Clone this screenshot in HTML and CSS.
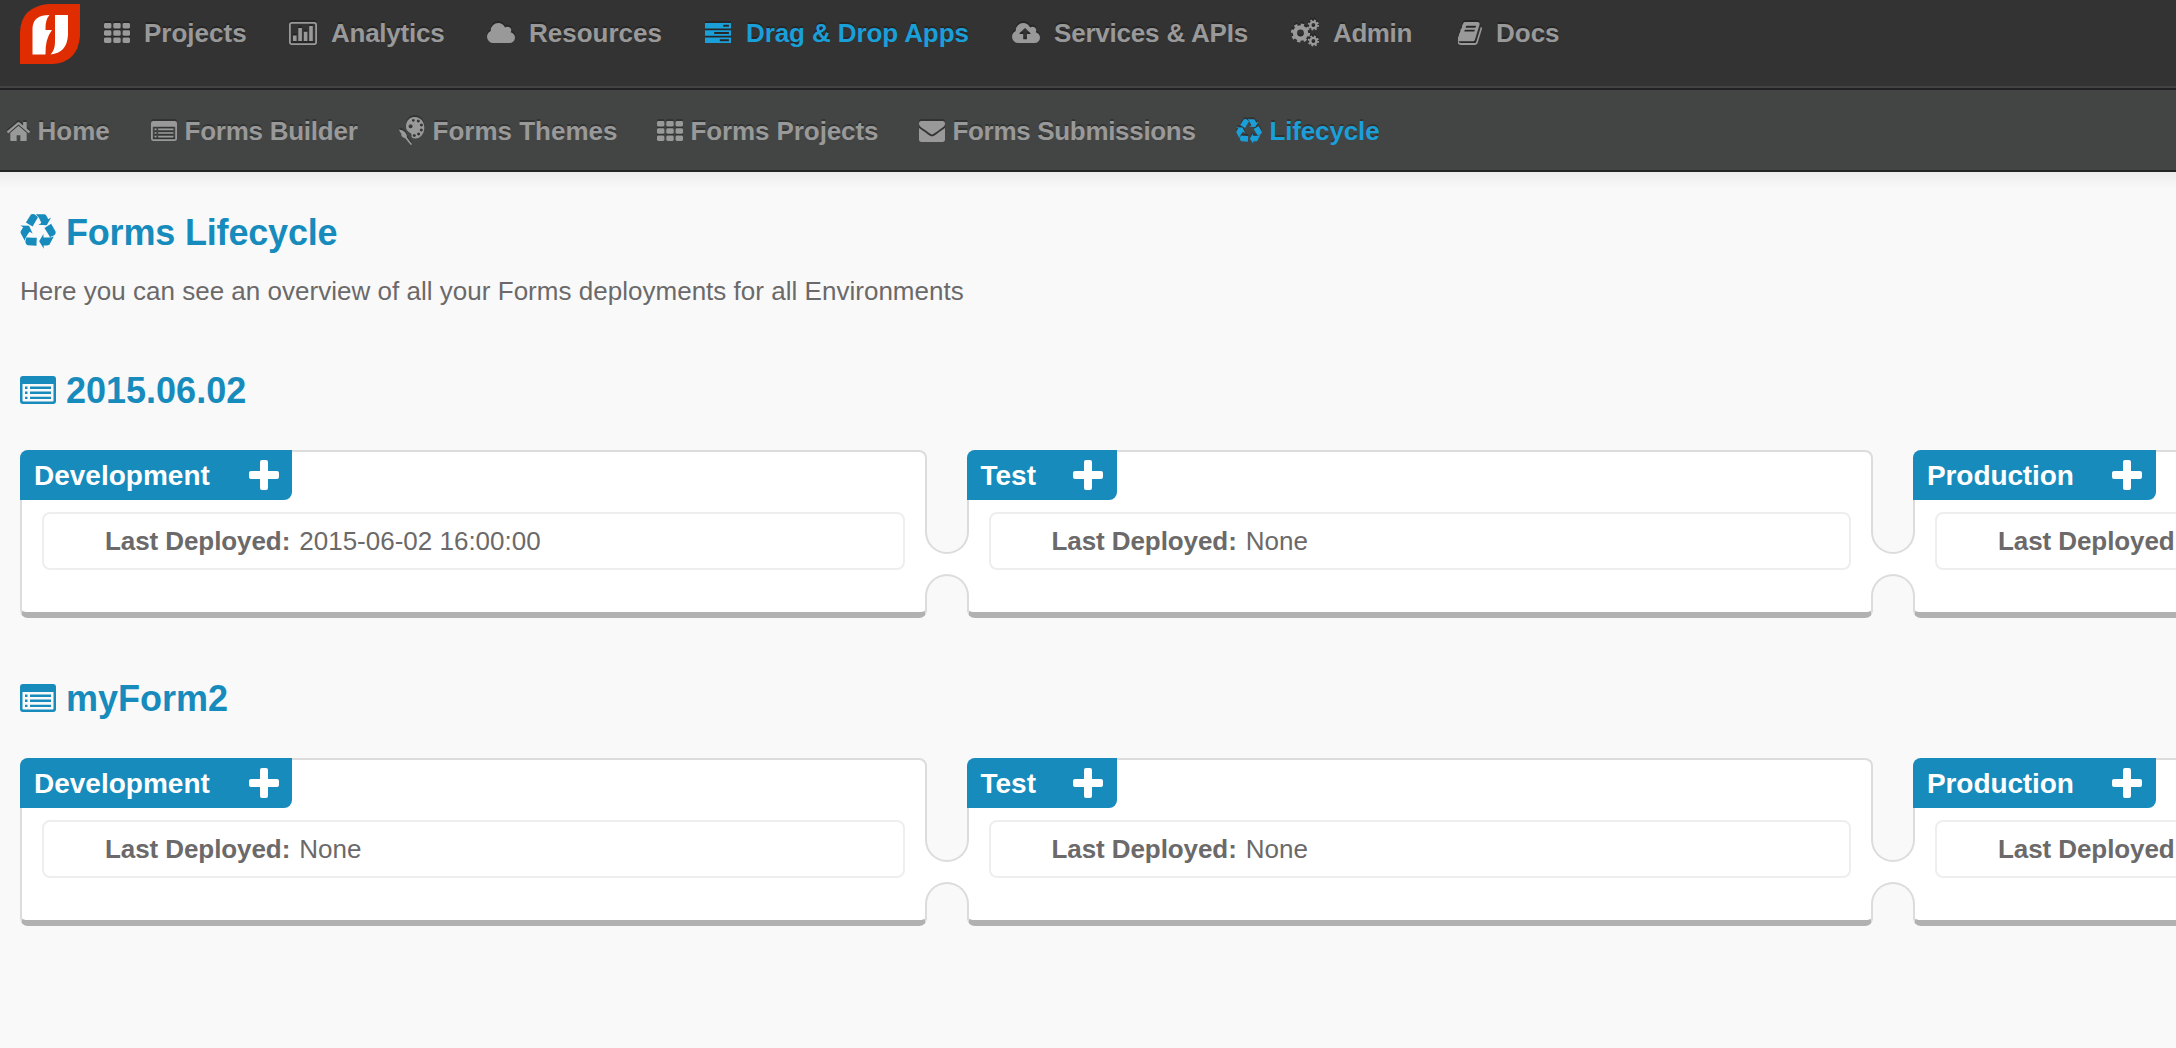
FILE: index.html
```html
<!DOCTYPE html>
<html lang="en">
<head>
<meta charset="utf-8">
<title>Forms Lifecycle</title>
<link rel="stylesheet" href="styles.css">
</head>
<body>
<svg class="sprite" aria-hidden="true">
  <symbol id="th" viewBox="0 0 26 20"><rect width="7.4" height="5.4" rx="1.4"/><rect x="9.3" width="7.4" height="5.4" rx="1.4"/><rect x="18.6" width="7.4" height="5.4" rx="1.4"/><rect y="7.3" width="7.4" height="5.4" rx="1.4"/><rect x="9.3" y="7.3" width="7.4" height="5.4" rx="1.4"/><rect x="18.6" y="7.3" width="7.4" height="5.4" rx="1.4"/><rect y="14.6" width="7.4" height="5.4" rx="1.4"/><rect x="9.3" y="14.6" width="7.4" height="5.4" rx="1.4"/><rect x="18.6" y="14.6" width="7.4" height="5.4" rx="1.4"/></symbol>
  <symbol id="chart" viewBox="0 0 28 23"><rect x=".9" y=".9" width="26.2" height="21.2" rx="1.8" fill="none" stroke="currentColor" stroke-width="1.8"/><path d="M4 13.5h3.6V19H4zM9.3 6h3.6v13H9.3zM14.8 9.7h3.6V19h-3.6zM20.2 4h3.6v15h-3.6z"/></symbol>
  <symbol id="cloud" viewBox="64 128 1920 1408" preserveAspectRatio="none"><path d="M1984 1152q0 159-112.5 271.5t-271.5 112.5h-1088q-185 0-316.5-131.5t-131.5-316.5q0-132 71-241.5t187-163.5q-2-28-2-43 0-212 150-362t362-150q158 0 286.5 88t187.5 230q70-62 166-62 106 0 181 75t75 181q0 75-41 138 129 30 213 134.5t84 239.5z"/></symbol>
  <symbol id="tasks" viewBox="0 0 26 20"><path fill-rule="evenodd" d="M0 0h26v5.4H0zM18.3 1.7v2h5.6v-2zM0 7.3h26v5.4H0zM9.2 9v2h14.7V9zM0 14.6h26V20H0zM14.8 16.3v2h9.1v-2z"/></symbol>
  <symbol id="upload" viewBox="0 192 1920 1408" preserveAspectRatio="none"><path d="M1280 928q0-14-9-23L919 553q-9-9-23-9t-23 9L522 904q-10 12-10 24 0 14 9 23t23 9h224v352q0 13 9.500 22.500t22.500 9.500h192q13 0 22.500-9.500t9.500-22.500V960h224q13 0 22.500-9.500T1280 928zm640 288q0 159-112.500 271.500T1536 1600H448q-185 0-316.500-131.500T0 1152q0-130 70-240t188-165q-2-30-2-43 0-212 150-362t362-150q156 0 285.500 87T1242 510q71-62 166-62 106 0 181 75t75 181q0 76-41 138 130 31 213.500 135.500T1920 1216z"/></symbol>
  <symbol id="cogs" viewBox="0 0 28 28"><g fill="none" stroke="currentColor"><circle cx="9.500" cy="14" r="5.600" stroke-width="4.400"/><circle cx="9.500" cy="14" r="8.300" stroke-width="2.600" stroke-dasharray="3.259"/><circle cx="22.400" cy="6" r="3.100" stroke-width="2.400"/><circle cx="22.400" cy="6" r="4.700" stroke-width="1.800" stroke-dasharray="1.846"/><circle cx="22.400" cy="22" r="3.100" stroke-width="2.400"/><circle cx="22.400" cy="22" r="4.700" stroke-width="1.800" stroke-dasharray="1.846"/></g></symbol>
  <symbol id="book" viewBox="64 128 1604 1536" preserveAspectRatio="none"><path d="M1639 478q40 57 18 129l-275 906q-19 64-76.500 107.500t-122.500 43.500h-923q-77 0-148.500-53.500t-99.500-131.500q-24-67-2-127 0-4 3-27t4-37q1-8-3-21.500t-3-19.500q2-11 8-21t16.500-23.500 16.500-23.500q23-38 45-91.500t30-91.500q3-10 .5-30t-.5-28q3-11 17-28t17-23q21-36 42-92t25-90q1-9-2.500-32t.5-28q4-13 22-30.500t22-22.500q19-26 42.500-84.500t27.500-96.500q1-8-3-25.500t-2-26.500q2-8 9-18t18-23 17-21q8-12 16.500-30.500t15-35 16-36 19.500-32 26.500-23.500 36-11.500 47.500 5.500l-1 3q38-9 51-9h761q74 0 114 56t18 130l-274 906q-36 119-71.500 153.500t-128.500 34.500h-869q-27 0-38 15-11 16-1 43 24 70 144 70h923q29 0 56-15.500t35-41.500l300-987q7-22 5-57 38 15 59 43zm-1064 2q-4 13 2 22.500t20 9.500h608q13 0 25.500-9.500t16.500-22.500l21-64q4-13-2-22.500t-20-9.500h-608q-13 0-25.500 9.500t-16.500 22.500zm-83 256q-4 13 2 22.500t20 9.500h608q13 0 25.500-9.500t16.500-22.500l21-64q4-13-2-22.500t-20-9.500h-608q-13 0-25.500 9.500t-16.500 22.500z"/></symbol>
  <symbol id="home" viewBox="90 253 1612 1283" preserveAspectRatio="none"><path d="M1472 992v480q0 26-19 45t-45 19h-384v-384h-256v384h-384q-26 0-45-19t-19-45v-480q0-1 .5-3t.5-3l575-474 575 474q1 2 1 6zm223-69l-62 74q-8 9-21 11h-3q-13 0-21-7l-692-577-692 577q-12 8-24 7-13-2-21-11l-62-74q-8-10-7-23.500t11-21.500l719-599q32-26 76-26t76 26l244 204v-195q0-14 9-23t23-9h192q14 0 23 9t9 23v408l219 182q10 8 11 21.500t-7 23.500z"/></symbol>
  <symbol id="form" viewBox="0 0 36 28" preserveAspectRatio="none"><path fill-rule="evenodd" d="M3 0h30a3 3 0 0 1 3 3v22a3 3 0 0 1-3 3H3a3 3 0 0 1-3-3V3a3 3 0 0 1 3-3zM2.500 8v16.700q0 .8.8.8h29.400q.8 0 .8-.8V8z"/><path d="M5 10.500h2.500v2.400H5zM10 10.500h21v2.400H10zM5 15.600h2.500V18H5zM10 15.600h21V18H10zM5 20.700h2.500v2.400H5zM10 20.700h21v2.400H10z"/></symbol>
  <symbol id="palette" viewBox="0 0 26 28"><path fill-rule="evenodd" d="M15.500 0C22 0 25.500 5 25.300 11c-.2 6-4 10.500-8.800 10.500-3 0-4.300-1.300-4-3 .3-2-.8-2.300-2.300-3.300C8 13.800 6.700 12 7 8.500 7.500 3.500 11 0 15.500 0zM11.600 7.200a2 2 0 1 0 .01 0zM14.300 1.900a1.400 1.400 0 1 0 .01 0zM19.300 2.500a1.500 1.500 0 1 0 .01 0zM22.400 6.500a1.500 1.500 0 1 0 .01 0zM22.300 11.500a1.500 1.500 0 1 0 .01 0zM19.600 15.400a1.500 1.500 0 1 0 .01 0zM15.300 17a1.500 1.500 0 1 0 .01 0z"/><path d="M0 12.500q4.500.5 6.500 3.200 1.700 2.500 1.500 4.800L13 27.300l-1.300.7-5.200-6.600Q1.500 20 2.300 16.500q-1.500-1-2.300-4z"/></symbol>
  <symbol id="mail" viewBox="0 256 1792 1408" preserveAspectRatio="none"><path d="M1792 710v794q0 66-47 113t-113 47h-1472q-66 0-113-47t-47-113v-794q44 49 101 87 362 246 497 345 57 42 92.500 65.500t94.500 48 110 24.500h2q51 0 110-24.500t94.500-48 92.500-65.500q170-123 498-345 57-39 100-87zm0-294q0 79-49 151t-122 123q-376 261-468 325-10 7-42.500 31t-54 38.500-52 32.500-57.500 27-50 9h-2q-23 0-50-9t-57.500-27-52-32.500-54-38.500-42.500-31q-91-64-262-182.500t-205-142.500q-62-42-117-115.500t-55-136.500q0-78 41.500-130t118.500-52h1472q65 0 112.500 47t47.500 113z"/></symbol>
  <symbol id="recycle" viewBox="0 0 1792 1720" preserveAspectRatio="none"><path d="M836 1169l-15 368-2 22-420-29q-36-3-67-31.500t-47-65.500q-11-27-14.500-55t4-65 12-55 21.500-64 19-53q78 12 509 28zm-387-586l180 379-147-92q-63 72-111.500 144.500t-72.500 125-39.500 94.500-18.500 63l-4 21-190-357q-17-26-18-56t6-47l8-18q35-63 114-188l-140-86zm1231 517l-188 359q-12 29-36.500 46.500t-43.500 20.500l-18 4q-71 7-219 12l8 164-230-367 211-362 7 173q170 16 283 5t170-33zm-785-924q-47 63-265 435l-317-187-19-12 225-356q20-31 60-45t80-10q24 2 48.500 12t42 21 41.500 33 36 34.500 36 39.500 32 35zm655 307l212 363q18 37 12.500 76t-27.500 74q-13 20-33 37t-38 28-48.500 22-47 16-51.500 14-46 12q-34-72-265-436l313-195zm-143-226l142-83-220 373-419-20 151-86q-34-89-75-166t-75.500-123.500-64.500-80-47-46.500l-17-13 405 1q31-3 58 10.500t39 28.500l11 15q39 61 112 190z"/></symbol>
  <symbol id="plus" viewBox="0 0 30 30"><path d="M13 0h4q2 0 2 2v9h9q2 0 2 2v4q0 2-2 2h-9v9q0 2-2 2h-4q-2 0-2-2v-9H2q-2 0-2-2v-4q0-2 2-2h9V2q0-2 2-2z"/></symbol>
</svg>

<header class="topbar">
  <svg class="logo" viewBox="0 0 60 60"><path fill="#df2c00" d="M0 60V28Q1 3 28 0h32v32q-2 26-27 28z"/><path fill="#fff" d="M12.500 50.500V24Q13 11 29.500 11q-4.500 5-4 15H32q-7 9-6.500 24.500zM35 11h13v20q-1 18-17.500 19.500Q35 46 35 38z"/></svg>
  <nav class="nav main">
    <a class="i1"><svg class="icon" style="width:26px;height:20px"><use href="#th"/></svg>Projects</a>
    <a class="i2"><svg class="icon" style="width:28px;height:23px"><use href="#chart"/></svg>Analytics</a>
    <a class="i3"><svg class="icon" style="width:28px;height:20px"><use href="#cloud"/></svg>Resources</a>
    <a class="i4 active"><svg class="icon" style="width:26px;height:20px"><use href="#tasks"/></svg>Drag &amp; Drop Apps</a>
    <a class="i5"><svg class="icon" style="width:28px;height:20px"><use href="#upload"/></svg>Services &amp; APIs</a>
    <a class="i6"><svg class="icon" style="width:28px;height:28px"><use href="#cogs"/></svg>Admin</a>
    <a class="i7"><svg class="icon" style="width:24px;height:23px"><use href="#book"/></svg>Docs</a>
  </nav>
</header>
<nav class="nav sub">
  <a class="s1"><svg class="icon" style="width:23px;height:19px"><use href="#home"/></svg>Home</a>
  <a class="s2"><svg class="icon" style="width:26px;height:20px"><use href="#form"/></svg>Forms Builder</a>
  <a class="s3"><svg class="icon" style="width:26px;height:28px"><use href="#palette"/></svg>Forms Themes</a>
  <a class="s4"><svg class="icon" style="width:26px;height:20px"><use href="#th"/></svg>Forms Projects</a>
  <a class="s5"><svg class="icon" style="width:26px;height:21px"><use href="#mail"/></svg>Forms Submissions</a>
  <a class="s6 active"><svg class="icon" style="width:26px;height:25px"><use href="#recycle"/></svg>Lifecycle</a>
</nav>

<main class="page">
  <h1 class="title"><svg class="recycle"><use href="#recycle"/></svg>Forms Lifecycle</h1>
  <p class="intro">Here you can see an overview of all your Forms deployments for all Environments</p>

  <section class="form">
    <h2 class="title"><svg class="list"><use href="#form"/></svg>2015.06.02</h2>
    <div class="stages">
      <article class="card"><div class="tab dev">Development<svg class="plus"><use href="#plus"/></svg></div><div class="info"><b>Last Deployed:</b>2015-06-02 16:00:00</div></article>
      <div class="link"><i class="lobe"></i><i class="arch"></i></div>
      <article class="card"><div class="tab test">Test<svg class="plus"><use href="#plus"/></svg></div><div class="info"><b>Last Deployed:</b>None</div></article>
      <div class="link"><i class="lobe"></i><i class="arch"></i></div>
      <article class="card"><div class="tab prod">Production<svg class="plus"><use href="#plus"/></svg></div><div class="info"><b>Last Deployed:</b>None</div></article>
    </div>
  </section>

  <section class="form">
    <h2 class="title"><svg class="list"><use href="#form"/></svg>myForm2</h2>
    <div class="stages">
      <article class="card"><div class="tab dev">Development<svg class="plus"><use href="#plus"/></svg></div><div class="info"><b>Last Deployed:</b>None</div></article>
      <div class="link"><i class="lobe"></i><i class="arch"></i></div>
      <article class="card"><div class="tab test">Test<svg class="plus"><use href="#plus"/></svg></div><div class="info"><b>Last Deployed:</b>None</div></article>
      <div class="link"><i class="lobe"></i><i class="arch"></i></div>
      <article class="card"><div class="tab prod">Production<svg class="plus"><use href="#plus"/></svg></div><div class="info"><b>Last Deployed:</b>None</div></article>
    </div>
  </section>
</main>
</body>
</html>
```
FILE: styles.css
```css
* { box-sizing: border-box; }
body {
  margin: 0;
  height: 1048px;
  overflow: hidden;
  background: #f9f9f9;
  color: #6b6969;
  font: 26px/30px "Liberation Sans", Arial, sans-serif;
}
svg { fill: currentColor; display: block; flex: none; }
.sprite { display: none; }

.topbar {
  display: flex;
  height: 90px;
  padding-left: 20px;
  background: #333;
  border-bottom: 2px solid #222224;
  box-shadow: inset 0 -2px #434343;
}
.logo { width: 60px; height: 60px; margin-top: 4px; }

.nav { display: flex; color: #999; font-weight: bold; text-shadow: 0 -2px 0 rgba(0, 0, 0, .25); white-space: nowrap; }
.nav a { display: flex; flex: none; align-items: center; height: 30px; }
.icon { filter: drop-shadow(0 -2px 0 rgba(0, 0, 0, .25)); }
.nav .active { color: #1a9fd9; }
.main { margin: 18px 0 0 24px; }
.main .icon { margin-right: 14px; }
.i1 { width: 185px; }
.i2 { width: 198px; letter-spacing: -.25px; }
.i3 { width: 218px; }
.main .i4 .icon { margin-right: 15px; }
.i4 { width: 307px; letter-spacing: -.1px; }
.i5 { width: 279px; letter-spacing: -.2px; }
.i6 { width: 167px; letter-spacing: -.4px; }

.sub {
  height: 82px;
  padding: 26px 0 0 7px;
  background: #434544;
  border-bottom: 2px solid #222426;
}
.sub .icon { margin-right: 7.5px; }
.s1 { width: 144px; }
.s2 { width: 248px; letter-spacing: -.25px; }
.s3 { width: 258px; }
.s4 { width: 262px; letter-spacing: -.1px; }
.s5 { width: 317px; letter-spacing: -.32px; }
.s6 { letter-spacing: -.15px; }

.page {
  height: 876px;
  padding: 40px 0 0 20px;
  overflow: hidden;
  background: linear-gradient(#ececec, #f9f9f9 16px);
}
.title {
  display: flex;
  align-items: center;
  gap: 10px;
  height: 42px;
  margin: 0;
  color: #168bbc;
  font-size: 36px;
  line-height: 42px;
}
h1.title { letter-spacing: -.18px; }
.recycle { width: 36px; height: 35px; margin-top: -3px; }
.list { width: 36px; height: 28px; margin-top: -3px; }
.intro { margin: 22px 0 0; white-space: nowrap; letter-spacing: .02px; }
.form { margin-top: 64px; height: 244px; }
.form .title { margin-bottom: 38px; }

.stages { display: flex; }
.card {
  flex: none;
  width: 906.5px;
  height: 168px;
  background: #fff;
  border: 2px solid #dcdcdc;
  border-bottom: 6px solid #b1b1b1;
  border-radius: 8px;
}
.tab {
  display: flex;
  align-items: center;
  justify-content: space-between;
  height: 50px;
  margin: -2px 0 0 -2px;
  padding: 2px 14px 0;
  background: #168bbc;
  border-radius: 8px 0 8px 0;
  color: #fff;
  font-size: 28px;
  font-weight: bold;
}
.dev { width: 272px; padding-right: 13px; }
.test { width: 150px; }
.prod { width: 243px; letter-spacing: -.1px; }
.plus { width: 30px; height: 30px; margin-top: -2px; }
.info {
  display: flex;
  align-items: center;
  gap: 9px;
  height: 58px;
  margin: 12px 20px 0;
  padding-left: 61px;
  border: 2px solid #eee;
  border-radius: 8px;
  white-space: nowrap;
}
.info b { letter-spacing: -.08px; }

/* White bridge between two stages, notched above and below. */
.link {
  position: relative;
  flex: none;
  display: flex;
  flex-direction: column;
  gap: 20px;
  width: 44px;
  height: 66px;
  margin: 80px -2px 0;
  background: #fff;
}
.lobe, .arch { flex: none; background: #f9f9f9; border: 2px solid #dcdcdc; }
.lobe { height: 24px; border-top: 0; border-radius: 0 0 22px 22px; }
.arch { height: 38px; border-bottom: 0; border-radius: 22px 22px 0 0; }
```
